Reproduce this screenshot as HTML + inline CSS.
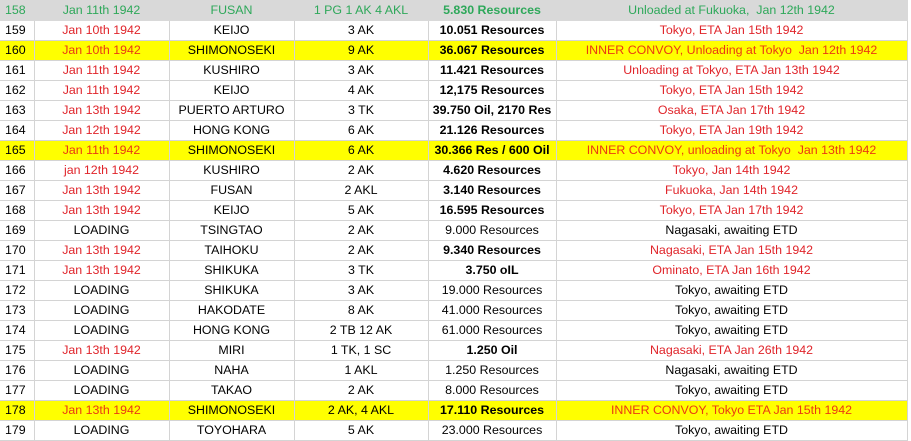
<!DOCTYPE html><html><head><style>
body{margin:0;width:911px;height:440px;overflow:hidden;background:#fff;font-family:"Liberation Sans",Arial,sans-serif;font-size:12.4px}
table{border-collapse:collapse;table-layout:fixed;width:907px}
td{height:19px;padding:0;border:1px solid #d4d4d4;text-align:center;white-space:nowrap;overflow:hidden;color:#000;line-height:19px}
td:first-child{text-align:left;padding-left:5px;border-left:none}
td:nth-child(5){font-weight:bold}
tr.g td{background:#d9d9d9;border-color:#d9d9d9;color:#2ea85a}
tr.y td{background:#ffff00}
.r{color:#e0242a}
tr.y .r{color:#ea3a12}
.n{font-weight:normal!important}
</style></head><body>
<table>
<colgroup><col style="width:34px"><col style="width:135px"><col style="width:125px"><col style="width:134px"><col style="width:128px"><col style="width:351px"></colgroup>
<tr class="g"><td>158</td><td>Jan 11th 1942</td><td>FUSAN</td><td>1 PG 1 AK 4 AKL</td><td>5.830 Resources</td><td>Unloaded at Fukuoka,&nbsp; Jan 12th 1942</td></tr>
<tr><td>159</td><td class="r">Jan 10th 1942</td><td>KEIJO</td><td>3 AK</td><td>10.051 Resources</td><td class="r">Tokyo, ETA Jan 15th 1942</td></tr>
<tr class="y"><td>160</td><td class="r">Jan 10th 1942</td><td>SHIMONOSEKI</td><td>9 AK</td><td>36.067 Resources</td><td class="r">INNER CONVOY, Unloading at Tokyo&nbsp; Jan 12th 1942</td></tr>
<tr><td>161</td><td class="r">Jan 11th 1942</td><td>KUSHIRO</td><td>3 AK</td><td>11.421 Resources</td><td class="r">Unloading at Tokyo, ETA Jan 13th 1942</td></tr>
<tr><td>162</td><td class="r">Jan 11th 1942</td><td>KEIJO</td><td>4 AK</td><td>12,175 Resources</td><td class="r">Tokyo, ETA Jan 15th 1942</td></tr>
<tr><td>163</td><td class="r">Jan 13th 1942</td><td>PUERTO ARTURO</td><td>3 TK</td><td>39.750 Oil, 2170 Res</td><td class="r">Osaka, ETA Jan 17th 1942</td></tr>
<tr><td>164</td><td class="r">Jan 12th 1942</td><td>HONG KONG</td><td>6 AK</td><td>21.126 Resources</td><td class="r">Tokyo, ETA Jan 19th 1942</td></tr>
<tr class="y"><td>165</td><td class="r">Jan 11th 1942</td><td>SHIMONOSEKI</td><td>6 AK</td><td>30.366 Res / 600 Oil</td><td class="r">INNER CONVOY, unloading at Tokyo&nbsp; Jan 13th 1942</td></tr>
<tr><td>166</td><td class="r">jan 12th 1942</td><td>KUSHIRO</td><td>2 AK</td><td>4.620 Resources</td><td class="r">Tokyo, Jan 14th 1942</td></tr>
<tr><td>167</td><td class="r">Jan 13th 1942</td><td>FUSAN</td><td>2 AKL</td><td>3.140 Resources</td><td class="r">Fukuoka, Jan 14th 1942</td></tr>
<tr><td>168</td><td class="r">Jan 13th 1942</td><td>KEIJO</td><td>5 AK</td><td>16.595 Resources</td><td class="r">Tokyo, ETA Jan 17th 1942</td></tr>
<tr><td>169</td><td>LOADING</td><td>TSINGTAO</td><td>2 AK</td><td class="n">9.000 Resources</td><td>Nagasaki, awaiting ETD</td></tr>
<tr><td>170</td><td class="r">Jan 13th 1942</td><td>TAIHOKU</td><td>2 AK</td><td>9.340 Resources</td><td class="r">Nagasaki, ETA Jan 15th 1942</td></tr>
<tr><td>171</td><td class="r">Jan 13th 1942</td><td>SHIKUKA</td><td>3 TK</td><td>3.750 oIL</td><td class="r">Ominato, ETA Jan 16th 1942</td></tr>
<tr><td>172</td><td>LOADING</td><td>SHIKUKA</td><td>3 AK</td><td class="n">19.000 Resources</td><td>Tokyo, awaiting ETD</td></tr>
<tr><td>173</td><td>LOADING</td><td>HAKODATE</td><td>8 AK</td><td class="n">41.000 Resources</td><td>Tokyo, awaiting ETD</td></tr>
<tr><td>174</td><td>LOADING</td><td>HONG KONG</td><td>2 TB 12 AK</td><td class="n">61.000 Resources</td><td>Tokyo, awaiting ETD</td></tr>
<tr><td>175</td><td class="r">Jan 13th 1942</td><td>MIRI</td><td>1 TK, 1 SC</td><td>1.250 Oil</td><td class="r">Nagasaki, ETA Jan 26th 1942</td></tr>
<tr><td>176</td><td>LOADING</td><td>NAHA</td><td>1 AKL</td><td class="n">1.250 Resources</td><td>Nagasaki, awaiting ETD</td></tr>
<tr><td>177</td><td>LOADING</td><td>TAKAO</td><td>2 AK</td><td class="n">8.000 Resources</td><td>Tokyo, awaiting ETD</td></tr>
<tr class="y"><td>178</td><td class="r">Jan 13th 1942</td><td>SHIMONOSEKI</td><td>2 AK, 4 AKL</td><td>17.110 Resources</td><td class="r">INNER CONVOY, Tokyo ETA Jan 15th 1942</td></tr>
<tr><td>179</td><td>LOADING</td><td>TOYOHARA</td><td>5 AK</td><td class="n">23.000 Resources</td><td>Tokyo, awaiting ETD</td></tr>
</table>
</body></html>
